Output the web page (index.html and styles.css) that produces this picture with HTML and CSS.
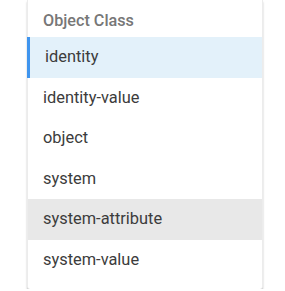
FILE: index.html
```html
<!DOCTYPE html>
<html lang="en">
<head>
    <meta charset="UTF-8">
    <title>Object Class</title>
    <link rel="stylesheet" href="styles.css">
</head>
<body>
    <div class="menu">
        <div class="menu-header">Object Class</div>
        <ul class="menu-list">
            <li class="menu-item selected">identity</li>
            <li class="menu-item">identity-value</li>
            <li class="menu-item">object</li>
            <li class="menu-item">system</li>
            <li class="menu-item hover">system-attribute</li>
            <li class="menu-item">system-value</li>
        </ul>
    </div>
</body>
</html>
```

FILE: styles.css
```css
body, html {
    margin: 0;
    padding: 0;
    background: #fff;
    font-family: 'Roboto', 'Liberation Sans', sans-serif;
}

/* dropdown panel */
.menu {
    margin-left: 27px;
    width: 236px;
    background: #fff;
    padding-bottom: 8px;
    border-left: 1px solid #ececec;
    border-right: 1px solid #ececec;
    box-sizing: border-box;
    box-shadow: 0 2px 2px rgba(0, 0, 0, 0.25);
    border-radius: 0 0 3px 3px;
}

.menu-header {
    height: 37px;
    box-sizing: border-box;
    padding: 11px 0 0 15px;
    font-size: 16.2px;
    font-weight: 500;
    color: #777;
}

.menu-list {
    list-style: none;
    margin: 0;
    padding: 0;
}

.menu-item {
    height: 40.6px;
    line-height: 40.6px;
    padding-left: 15px;
    font-size: 16.4px;
    color: #3c3c3c;
}

.menu-item.selected {
    background: #e3f1fa;
    border-left: 3px solid #3f95ee;
    margin-left: -1px;
}

.menu-item.hover {
    background: #e8e8e8;
}
```
